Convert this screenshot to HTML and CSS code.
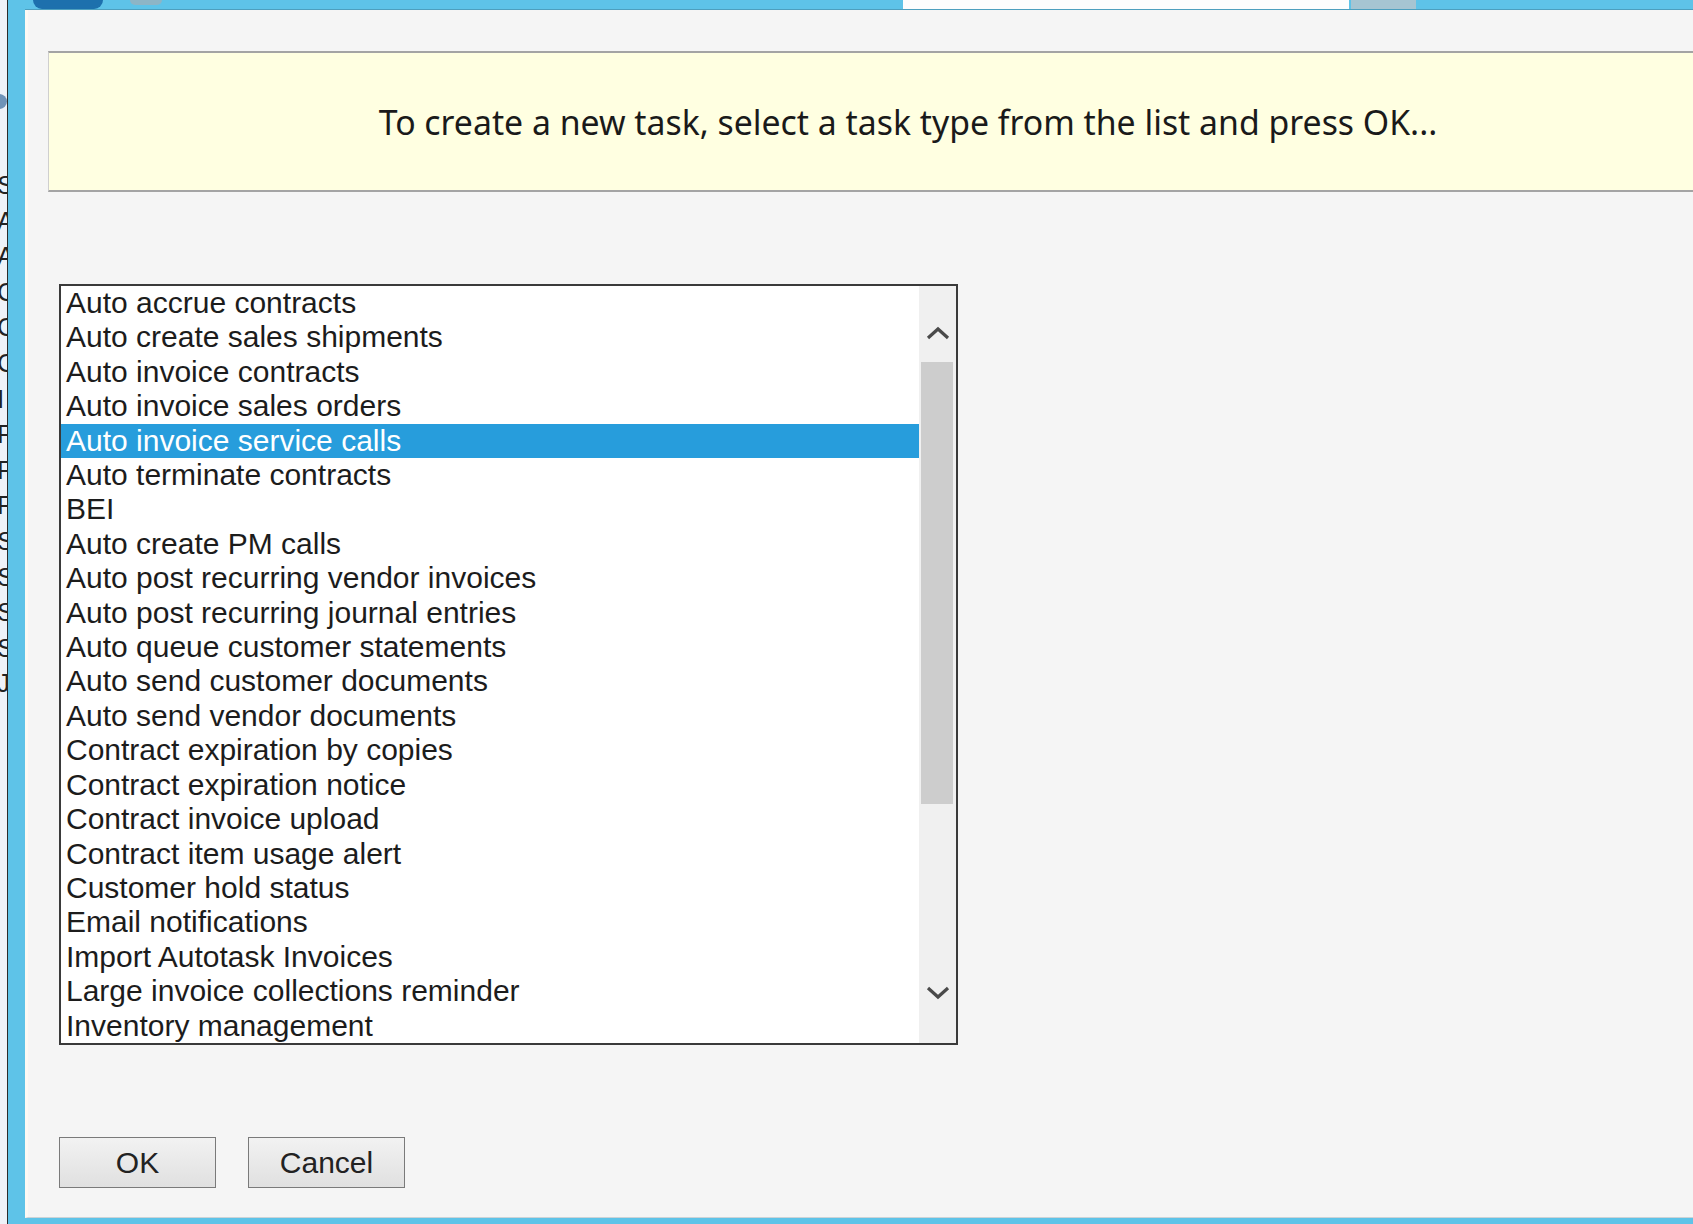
FILE: index.html
```html
<!DOCTYPE html>
<html lang="en">
<head>
    <meta charset="utf-8">
    <title>New task</title>
    <link rel="stylesheet" href="styles.css">
</head>
<body>
    <div class="screen">
        <!-- window behind the dialog, only its edge shows -->
        <div class="behind">
            <span class="behind-icon"></span>
            <ul class="behind-list">
                <li>S</li><li>A</li><li>A</li><li>C</li><li>C</li>
                <li>C</li><li>I</li><li>P</li><li>F</li><li>F</li>
                <li>S</li><li>S</li><li>S</li><li>S</li><li>J</li>
            </ul>
        </div>

        <div class="window">
            <div class="titlebar">
                <span class="tb-home"></span>
                <span class="tb-circle"></span>
                <span class="tb-search"></span>
                <span class="tb-go"></span>
            </div>

            <div class="dialog">
                <div class="notice">
                    <p>To create a new task, select a task type from the list and press OK...</p>
                </div>

                <div class="listbox">
                    <ul class="task-list">
                        <li>Auto accrue contracts</li>
                        <li>Auto create sales shipments</li>
                        <li>Auto invoice contracts</li>
                        <li>Auto invoice sales orders</li>
                        <li class="selected">Auto invoice service calls</li>
                        <li>Auto terminate contracts</li>
                        <li>BEI</li>
                        <li>Auto create PM calls</li>
                        <li>Auto post recurring vendor invoices</li>
                        <li>Auto post recurring journal entries</li>
                        <li>Auto queue customer statements</li>
                        <li>Auto send customer documents</li>
                        <li>Auto send vendor documents</li>
                        <li>Contract expiration by copies</li>
                        <li>Contract expiration notice</li>
                        <li>Contract invoice upload</li>
                        <li>Contract item usage alert</li>
                        <li>Customer hold status</li>
                        <li>Email notifications</li>
                        <li>Import Autotask Invoices</li>
                        <li>Large invoice collections reminder</li>
                        <li>Inventory management</li>
                    </ul>
                    <div class="scrollbar">
                        <div class="sb-up">
                            <svg width="24" height="14" viewBox="0 0 24 14"><path d="M2 12 L12 3 L22 12" fill="none" stroke="#4a4a4a" stroke-width="3.2"/></svg>
                        </div>
                        <div class="sb-thumb"></div>
                        <div class="sb-track"></div>
                        <div class="sb-down">
                            <svg width="24" height="14" viewBox="0 0 24 14"><path d="M2 2 L12 11 L22 2" fill="none" stroke="#4a4a4a" stroke-width="3.2"/></svg>
                        </div>
                    </div>
                </div>

                <div class="actions">
                    <button>OK</button>
                    <button>Cancel</button>
                </div>
            </div>
        </div>
    </div>
</body>
</html>
```

FILE: styles.css
```css
body {
    margin: 0;
    overflow: hidden;
    background-color: #5ec3e8;
}
.screen {
    display: flex;
    width: 1693px;
    height: 1224px;
    overflow: hidden;
}

/* window behind */
.behind {
    flex: none;
    width: 7px;
    background-color: #eef2f8;
    border-right: 1px solid #2b2b2b;
    overflow: hidden;
    position: relative;
}
.behind-icon {
    position: absolute;
    left: -8px;
    top: 94px;
    width: 15px;
    height: 15px;
    border-radius: 50%;
    background-color: #6f93b8;
}
.behind-list {
    list-style: none;
    margin: 0;
    padding: 168px 0 0 0;
    margin-left: -3px;
    font-family: "Liberation Sans", Arial, sans-serif;
    font-size: 26px;
    line-height: 35.6px;
    color: #222;
}

/* main window */
.window {
    flex: 1;
    min-width: 0;
    display: flex;
    flex-direction: column;
    padding-left: 17px;
    padding-bottom: 6px;
    background-color: #5ec3e8;
}
.titlebar {
    flex: none;
    height: 9px;
    display: flex;
    align-items: flex-start;
    border-bottom: 1px solid #4d9fbe;
}
.tb-home {
    margin-left: 8px;
    width: 70px;
    height: 9px;
    background-color: #1d70ad;
    border-radius: 0 0 30px 30px;
}
.tb-circle {
    margin-left: 27px;
    width: 32px;
    height: 5px;
    background-color: #8db5c6;
    border-radius: 0 0 16px 16px;
}
.tb-search {
    margin-left: 741px;
    width: 446px;
    height: 9px;
    background-color: #fdfdfd;
}
.tb-go {
    margin-left: 2px;
    width: 65px;
    height: 9px;
    background-color: #a6c5d2;
}

.dialog {
    flex: 1;
    background-color: #f5f5f5;
    border-left: 3px solid #fcf9f4;
    border-bottom: 1px solid #cdd3d6;
    padding: 41px 0 0 20px;
    overflow: hidden;
}

.notice {
    width: 1718px;
    height: 137px;
    background-color: #ffffe1;
    border-top: 2px solid #a4a4a4;
    border-bottom: 2px solid #a4a4a4;
    border-left: 1px solid #cfcfcf;
    display: flex;
    align-items: center;
    justify-content: center;
}
.notice p {
    margin: 0;
    font-family: "Noto Sans", "Open Sans", sans-serif;
    font-size: 33.8px;
    color: #1a1a1a;
}

.listbox {
    margin: 92px 0 0 11px;
    width: 899px;
    height: 761px;
    box-sizing: border-box;
    border: 2px solid #3a3a3a;
    background-color: white;
    display: flex;
}
.task-list {
    flex: 1;
    list-style: none;
    margin: 0;
    padding: 0;
    font-family: "Liberation Sans", Arial, sans-serif;
    font-size: 30px;
    line-height: 34.4px;
    color: #1c1c1c;
    overflow: hidden;
}
.task-list li {
    padding-left: 5px;
    white-space: nowrap;
}
.task-list li.selected {
    background-color: #279ddc;
    color: white;
}

.scrollbar {
    flex: none;
    width: 37px;
    background-color: #f0f0f0;
    display: flex;
    flex-direction: column;
}
.sb-up, .sb-down {
    flex: none;
    height: 76px;
    display: flex;
    justify-content: center;
    align-items: center;
    box-sizing: border-box;
}
.sb-up {
    padding-top: 18px;
}
.sb-down {
    padding-bottom: 24px;
}
.sb-thumb {
    flex: none;
    height: 442px;
    margin: 0 3px 0 2px;
    background-color: #cdcdcd;
}
.sb-track {
    flex: 1;
}

.actions {
    display: flex;
    gap: 32px;
    margin: 92px 0 0 11px;
}
.actions button {
    width: 157px;
    height: 51px;
    border: 1px solid #7a7a7a;
    background: linear-gradient(#f2f2f2, #e0e0e0);
    font-family: "Liberation Sans", Arial, sans-serif;
    font-size: 30px;
    color: #222;
    padding: 0;
}
```
